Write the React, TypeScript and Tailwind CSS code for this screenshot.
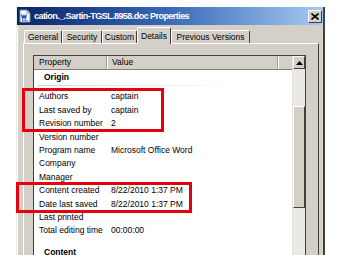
import React from 'react'

const rows: Array<{ label: string; value?: string }> = [
  { label: 'Authors', value: 'captain' },
  { label: 'Last saved by', value: 'captain' },
  { label: 'Revision number', value: '2' },
  { label: 'Version number' },
  { label: 'Program name', value: 'Microsoft Office Word' },
  { label: 'Company' },
  { label: 'Manager' },
  { label: 'Content created', value: '8/22/2010 1:37 PM' },
  { label: 'Date last saved', value: '8/22/2010 1:37 PM' },
  { label: 'Last printed' },
  { label: 'Total editing time', value: '00:00:00' },
]

const tabs = [
  { label: 'General', w: 'w-[38px]' },
  { label: 'Security', w: 'w-[40px]' },
  { label: 'Custom', w: 'w-[35px]' },
  { label: 'Details', w: 'w-[34px]', active: true },
  { label: 'Previous Versions', w: 'w-[79px]' },
]

const DocIcon = () => (
  <svg width="14" height="14" viewBox="0 0 14 14">
    <path d="M2 1h7l3 3v9H2z" fill="#fff" stroke="#7b8aa8" strokeWidth="1" />
    <path d="M9 1v3h3" fill="#dfe6f2" stroke="#7b8aa8" strokeWidth="1" />
    <path d="M3.5 5.5l1.2 4 1.3-3 1.3 3 1.2-4" fill="none" stroke="#2451b8" strokeWidth="1.3" />
    <path d="M4 11.5h6" stroke="#6d8fd6" strokeWidth="1" />
  </svg>
)

const App: React.FC = () => {
  return (
    <div className="relative w-[340px] h-[255px] overflow-hidden bg-white pl-[16px] pt-[7px] font-['Liberation_Sans',Arial,sans-serif] text-[8.5px] leading-none text-black">
      <div className="w-[309px] h-[260px] flex flex-col bg-[#d4d0c8] border-l border-l-[#ecebe7] border-r-2 border-r-[#404040]">
        {/* Title bar */}
        <div className="h-[18px] flex items-center bg-gradient-to-r from-[#0a246a] via-[#3a6ab8] to-[#a6caf0] pl-[1px] pr-[1px]">
          <DocIcon />
          <span className="ml-[2px] flex-1 text-white font-bold text-[9px] whitespace-nowrap tracking-[-0.55px]">
            cation._.Sartin-TGSL.8958.doc Properties
          </span>
          <button
            className="w-[14px] h-[13px] flex items-center justify-center bg-[#d4d0c8] border border-t-white border-l-white border-r-[#404040] border-b-[#404040]"
            type="button"
          >
            <svg width="8" height="7" viewBox="0 0 8 7">
              <path d="M0.5 0.5l7 6M7.5 0.5l-7 6" stroke="#000" strokeWidth="1.6" />
            </svg>
          </button>
        </div>

        {/* Body */}
        <div className="flex-1 flex flex-col pl-[2px] pr-[4px] pt-[2px] border-l border-l-white">
          <div className="flex-1 flex flex-col pl-[3px]">
            {/* Tabs */}
            <div className="h-[16px] flex items-end pl-[1px] relative z-10">
              {tabs.map((t) =>
                t.active ? (
                  <div
                    className={`${t.w} h-[17px] -mb-[1px] flex items-center justify-center bg-[#d4d0c8] border-l border-t border-l-white border-t-white border-r border-r-[#404040] rounded-t-[2px] whitespace-nowrap`}
                    key={t.label}
                  >
                    {t.label}
                  </div>
                ) : (
                  <div
                    className={`${t.w} h-[13px] flex items-center justify-center bg-[#d4d0c8] border-l border-t border-l-white border-t-white border-r border-r-[#404040] rounded-t-[2px] whitespace-nowrap`}
                    key={t.label}
                  >
                    {t.label}
                  </div>
                )
              )}
            </div>

            {/* Tab panel */}
            <div className="flex-1 flex flex-col border-l border-t border-white border-r border-r-[#404040] pl-[9px] pr-[12px] pt-[11px]">
              <div className="flex-1 flex border border-[#404040] bg-white">
                {/* list */}
                <div className="flex-1 flex flex-col">
                  <div className="h-[14px] flex bg-[#d4d0c8] border-b border-b-[#808080]">
                    <div className="w-[73px] flex items-center pl-[5px] border-r border-r-[#a09c94]">Property</div>
                    <div className="w-[171px] flex items-center pl-[4px] border-r border-r-[#a09c94] border-l border-l-white">Value</div>
                    <div className="flex-1 border-l border-l-white" />
                  </div>

                  <div className="h-[15px] flex items-center pl-[10px] font-bold">Origin</div>
                  <div className="h-px w-[200px] ml-[4px] bg-gradient-to-r from-[#c4d3e6] to-white" />
                  <div className="mt-[4px] flex flex-col">
                    {rows.map((r) => (
                      <div className="h-[13.4px] flex items-center pl-[5px]" key={r.label}>
                        <span className="w-[72px] whitespace-nowrap">{r.label}</span>
                        <span className="whitespace-nowrap">{r.value ?? ''}</span>
                      </div>
                    ))}
                  </div>
                  <div className="mt-[7px] h-[15px] flex items-center pl-[10px] font-bold">Content</div>
                </div>

                {/* scrollbar */}
                <div className="w-[13px] flex flex-col bg-[#ebe9e4] border-l border-l-[#e4e2dd]">
                  <div className="h-[13px] flex items-center justify-center bg-[#d4d0c8] border border-t-white border-l-white border-r-[#404040] border-b-[#404040]">
                    <svg width="7" height="4" viewBox="0 0 7 4">
                      <path d="M0 4L3.5 0L7 4z" fill="#000" />
                    </svg>
                  </div>
                  <div className="h-[37px]" />
                  <div className="h-[102px] bg-[#d4d0c8] border border-t-white border-l-white border-r-[#404040] border-b-[#404040]" />
                </div>
              </div>
            </div>
          </div>
        </div>
      </div>

      {/* Highlight boxes */}
      <div className="absolute left-[22px] top-[88px] w-[142px] h-[44px] border-[3px] border-[#e4000f]" />
      <div className="absolute left-[16px] top-[182px] w-[176px] h-[31px] border-[3px] border-[#e4000f]" />
    </div>
  )
}

export default App
